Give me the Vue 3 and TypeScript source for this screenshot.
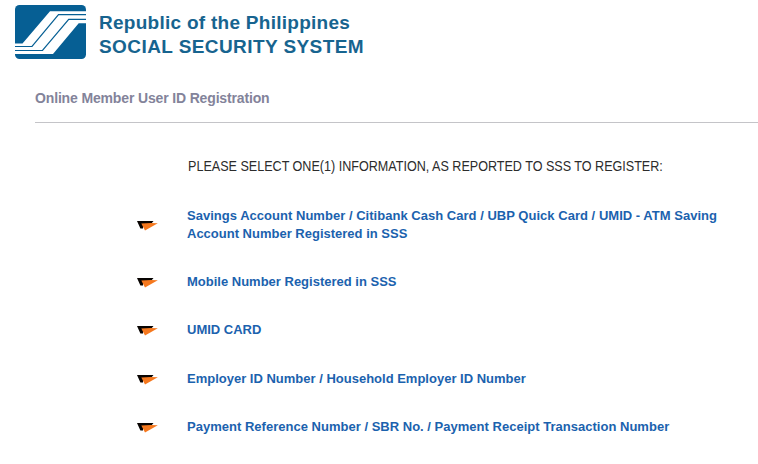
<script setup lang="ts">
interface Option {
  lines: { text: string; cls: string }[]
}

const options: Option[] = [
  {
    lines: [
      { text: 'Savings Account Number / Citibank Cash Card / UBP Quick Card / UMID - ATM Saving', cls: 'savings' },
      { text: 'Account Number Registered in SSS', cls: 'account' },
    ],
  },
  { lines: [{ text: 'Mobile Number Registered in SSS', cls: 'mobile' }] },
  { lines: [{ text: 'UMID CARD', cls: 'umid' }] },
  { lines: [{ text: 'Employer ID Number / Household Employer ID Number', cls: 'employer' }] },
  { lines: [{ text: 'Payment Reference Number / SBR No. / Payment Receipt Transaction Number', cls: 'payment' }] },
]
</script>

<template>
  <div class="page">
    <header class="brand">
      <svg class="logo" viewBox="0 0 71 54" aria-hidden="true">
        <rect width="71" height="54" rx="4.5" fill="#065f94" />
        <path d="M0 38.5H7.5L35 6.3H71V18.3H63.7L38 49H0Z" fill="#fff" />
        <path d="M0 41.5H17L43.5 9.6H71" fill="none" stroke="#065f94" stroke-width="1.2" />
        <path d="M0 45.5H27.5L53.7 14.4H71" fill="none" stroke="#065f94" stroke-width="1.2" />
      </svg>
      <div class="name">
        <span class="republic">Republic of the Philippines</span>
        <span class="system">SOCIAL SECURITY SYSTEM</span>
      </div>
    </header>
    <h1 class="title"><span>Online Member User ID Registration</span></h1>
    <main class="content">
      <p class="prompt">PLEASE SELECT ONE(1) INFORMATION, AS REPORTED TO SSS TO REGISTER:</p>
      <ul class="options">
        <li v-for="(option, i) in options" :key="i" class="option">
          <svg class="marker" viewBox="0 0 21 10" aria-hidden="true">
            <path d="M0 0H16.5L14 3H6V7.5H3.4Z" fill="#080402" />
            <path d="M4.3 2.6L14 2L20.8 2.2L8 9.6Z" fill="#f5781e" />
          </svg>
          <a class="link">
            <span v-for="line in option.lines" :key="line.cls" :class="line.cls">{{ line.text }}</span>
          </a>
        </li>
      </ul>
    </main>
  </div>
</template>

<style>
body {
  margin: 0;
  background: #fff;
}
</style>

<style scoped>
.page {
  height: 464px;
  overflow: hidden;
  background: #fff;
  font-family: "Liberation Sans", Arial, sans-serif;
  white-space: nowrap;
}
.brand {
  display: flex;
  padding: 5px 0 0 15px;
  height: 54px;
}
.logo {
  width: 71px;
  height: 54px;
}
.name {
  display: flex;
  flex-direction: column;
  align-items: flex-start;
  margin: 6px 0 0 13px;
  color: #17648f;
  font-size: 19px;
  font-weight: bold;
  line-height: 24px;
}
.republic {
  letter-spacing: 0.27px;
}
.system {
  letter-spacing: 0.42px;
}
.title {
  margin: 29px 0 0 35px;
  height: 34px;
  border-bottom: 1px solid #c4c4c8;
  color: #83839a;
  font-size: 14px;
  letter-spacing: -0.15px;
  line-height: 20px;
}
.content {
  padding: 33px 0 0 137px;
}
.prompt {
  margin: 0 0 0 51px;
  width: max-content;
  color: #2c2c2c;
  font-size: 14px;
  line-height: 20px;
  transform: scaleX(0.898);
  transform-origin: left;
}
.options {
  display: flex;
  flex-direction: column;
  gap: 30.3px;
  margin: 30.85px 0 0;
  padding: 0;
  list-style: none;
}
.option {
  display: flex;
  align-items: center;
}
.marker {
  width: 21px;
  height: 10px;
  margin-top: 2px;
}
.link {
  display: flex;
  flex-direction: column;
  align-items: flex-start;
  margin-left: 29px;
  color: #1b62ae;
  font-size: 13px;
  font-weight: bold;
  line-height: 18px;
}
.savings {
  letter-spacing: 0.025px;
}
.payment {
  letter-spacing: 0.015px;
}
</style>
